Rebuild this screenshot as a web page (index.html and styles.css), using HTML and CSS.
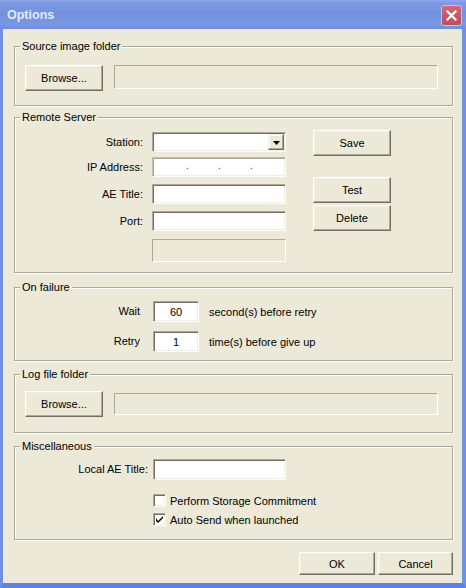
FILE: index.html
```html
<!DOCTYPE html>
<html>
<head>
<meta charset="utf-8">
<title>Options</title>
<link rel="stylesheet" href="styles.css">
</head>
<body>
<div class="window">
  <div class="titlebar">
    <span class="title">Options</span>
    <button class="close" type="button" aria-label="Close">
      <svg width="11" height="11" viewBox="0 0 11 11"><path d="M1.5 1.5 L9.5 9.5 M9.5 1.5 L1.5 9.5" stroke="#fff" stroke-width="2.2" stroke-linecap="square" fill="none"/></svg>
    </button>
  </div>
  <div class="frame">
    <fieldset class="group">
      <legend>Source image folder</legend>
      <div class="browse-row browse-source">
        <button class="btn btn-browse" type="button">Browse...</button>
        <input class="field field-path disabled" type="text" disabled>
      </div>
    </fieldset>

    <fieldset class="group">
      <legend>Remote Server</legend>
      <div class="remote-body">
        <div class="remote-grid">
          <label class="lbl">Station:</label>
          <div class="field combo"><span class="combo-text"></span><span class="combo-btn"><svg width="7" height="4" viewBox="0 0 7 4"><path d="M0 0 H7 L3.5 4 Z" fill="#000"/></svg></span></div>
          <label class="lbl">IP Address:</label>
          <div class="field ip"><span class="ip-seg"></span><span class="ip-dot">.</span><span class="ip-seg"></span><span class="ip-dot">.</span><span class="ip-seg"></span><span class="ip-dot">.</span><span class="ip-seg"></span></div>
          <label class="lbl">AE Title:</label>
          <input class="field" type="text">
          <label class="lbl">Port:</label>
          <input class="field" type="text">
          <span></span>
          <input class="field disabled field-tall" type="text" disabled>
        </div>
        <div class="remote-actions">
          <button class="btn btn-wide" type="button">Save</button>
          <button class="btn btn-wide btn-test" type="button">Test</button>
          <button class="btn btn-wide btn-delete" type="button">Delete</button>
        </div>
      </div>
    </fieldset>

    <fieldset class="group">
      <legend>On failure</legend>
      <div class="failure-grid">
        <label class="lbl lbl-fail">Wait</label>
        <input class="field field-num" type="text" value="60">
        <span class="suffix">second(s) before retry</span>
        <label class="lbl lbl-fail">Retry</label>
        <input class="field field-num" type="text" value="1">
        <span class="suffix">time(s) before give up</span>
      </div>
    </fieldset>

    <fieldset class="group">
      <legend>Log file folder</legend>
      <div class="browse-row browse-log">
        <button class="btn btn-browse" type="button">Browse...</button>
        <input class="field field-path field-log disabled" type="text" disabled>
      </div>
    </fieldset>

    <fieldset class="group">
      <legend>Miscellaneous</legend>
      <div class="misc-grid">
        <label class="lbl lbl-misc">Local AE Title:</label>
        <input class="field field-misc" type="text">
        <span></span>
        <div class="check-row check-first"><span class="checkbox"></span><span>Perform Storage Commitment</span></div>
        <div class="check-row"><span class="checkbox"><svg width="7" height="7" viewBox="0 0 7 7"><path d="M0 2 L0 5 L2 7 L7 2 L7 0 L2 5 Z" fill="#000"/></svg></span><span>Auto Send when launched</span></div>
      </div>
    </fieldset>

    <div class="dialog-buttons">
      <button class="btn btn-ok" type="button">OK</button>
      <button class="btn btn-cancel" type="button">Cancel</button>
    </div>
  </div>
</div>
</body>
</html>
```

FILE: styles.css
```css
* { box-sizing: border-box; }
html, body { margin: 0; padding: 0; }
body {
  width: 466px;
  height: 588px;
  overflow: hidden;
  background: #ECE9D8;
  font-family: "Liberation Sans", Arial, sans-serif;
  font-size: 11px;
  color: #000;
}

.window {
  width: 466px;
  height: 588px;
  display: flex;
  flex-direction: column;
}

.titlebar {
  height: 29px;
  flex: none;
  display: flex;
  align-items: flex-start;
  padding: 0 4px 0 7px;
  background: linear-gradient(to bottom, #8DA8EC 0, #7C99E3 3px, #7491E0 45%, #7A97E3 85%, #6E8BDB 100%);
}
.title {
  flex: 1;
  margin-top: 8px;
  color: #E2EBFB;
  font-weight: bold;
  font-size: 12.5px;
  line-height: 15px;
}
.close {
  appearance: none;
  margin: 5px 0 0 0;
  padding: 0;
  width: 21px;
  height: 21px;
  border: 1px solid #E7B3BC;
  border-radius: 3px;
  background: linear-gradient(to bottom, #CF6A7C, #C2566A 60%, #B9505F);
  display: flex;
  align-items: center;
  justify-content: center;
}
.close svg { display: block; }

.frame {
  flex: 1;
  display: flex;
  flex-direction: column;
  background: #ECE9D8;
  border-left: 3px solid #7390E0;
  border-right: 4px solid #7390E0;
  border-bottom: 5px solid #6281DC;
  padding: 0 9px 0 11px;
}

.group {
  margin: 7px 0 0 0;
  padding: 0;
  min-width: 0;
  border: 1px solid #ACA899;
  box-shadow: inset 1px 1px 0 #fff, 1px 1px 0 #fff;
}
.group:first-child { margin-top: 11px; }
.group:nth-child(2) { margin-top: 5px; }
.group:nth-child(3) { margin-top: 8px; }
.group legend {
  margin-left: 5px;
  padding: 0 2px;
  font-size: 11px;
  line-height: 13px;
  background: #ECE9D8;
}

.btn {
  appearance: none;
  margin: 0;
  padding: 0;
  font-family: inherit;
  font-size: 11px;
  color: #000;
  background: #ECE9D8;
  border: 1px solid;
  border-color: #fff #716F64 #716F64 #fff;
  box-shadow: inset -1px -1px 0 #ACA899, inset 1px 1px 0 #F1EFE2;
  text-align: center;
}
.btn-browse, .btn-wide { width: 78px; height: 26px; }

.field {
  display: block;
  margin: 0;
  padding: 0 3px;
  font-family: inherit;
  font-size: 11px;
  color: #000;
  background: #fff;
  border: 1px solid;
  border-color: #ACA899 #fff #fff #ACA899;
  box-shadow: inset 1px 1px 0 #716F64, inset -1px -1px 0 #F1EFE2;
  outline: none;
  height: 20px;
}
.field.disabled {
  background: #ECE9D8;
  box-shadow: none;
}

.browse-row {
  display: flex;
  align-items: flex-start;
  gap: 11px;
  padding-left: 10px;
}
.browse-source { padding-top: 12px; padding-bottom: 14px; }
.browse-log { padding-top: 10px; padding-bottom: 15px; }
.field-path { width: 324px; height: 24px; }
.field-log { height: 22px; margin-top: 2px; }

.remote-body {
  display: flex;
  align-items: flex-start;
  padding: 6px 0 10px 10px;
}
.remote-grid {
  display: grid;
  grid-template-columns: 118px 134px;
  grid-template-rows: 25px 27px 27px 28px 23px;
  column-gap: 9px;
  align-items: start;
  margin-top: 2px;
}
.lbl {
  text-align: right;
  line-height: 20px;
  white-space: nowrap;
}
.remote-grid .field { width: 134px; }
.field-tall { height: 23px; }

.combo {
  display: flex;
  padding: 1px;
}
.combo-text { flex: 1; }
.combo-btn {
  width: 16px;
  height: 16px;
  background: #ECE9D8;
  border: 1px solid;
  border-color: #F1EFE2 #716F64 #716F64 #F1EFE2;
  box-shadow: inset -1px -1px 0 #ACA899, inset 1px 1px 0 #fff;
  display: flex;
  align-items: center;
  justify-content: center;
}
.combo-btn svg { display: block; margin-top: 1px; }

.ip {
  display: grid;
  grid-template-columns: 33px 2px 30px 2px 30px 2px 1fr;
  padding: 0;
  line-height: 16px;
  border-color: #C2BFB0 #fff #fff #C2BFB0;
  box-shadow: inset 1px 1px 0 #A7A498, inset -1px -1px 0 #F1EFE2;
}
.ip-dot { font-size: 10px; color: #333; }

.remote-actions {
  display: flex;
  flex-direction: column;
  margin-left: 27px;
}
.btn-test { margin-top: 21px; }
.btn-delete { margin-top: 2px; }

.failure-grid {
  display: grid;
  grid-template-columns: 128px 46px auto;
  grid-auto-rows: 21px;
  row-gap: 9px;
  align-items: center;
  padding: 7px 0 8px 10px;
}
.lbl-fail { padding-right: 13px; line-height: 21px; }
.field-num { width: 46px; height: 21px; text-align: center; }
.suffix { padding-left: 10px; white-space: nowrap; }

.misc-grid {
  display: grid;
  grid-template-columns: 123px 133px 1fr;
  column-gap: 5px;
  align-items: start;
  padding: 6px 0 11px 10px;
}
.lbl-misc { line-height: 21px; }
.field-misc { width: 133px; height: 21px; }
.check-row {
  grid-column: 2 / 4;
  display: flex;
  align-items: center;
  gap: 4px;
  height: 17px;
  margin-top: 2px;
  white-space: nowrap;
}
.check-first { margin-top: 12px; }
.checkbox {
  width: 13px;
  height: 13px;
  flex: none;
  background: #fff;
  border: 1px solid;
  border-color: #ACA899 #fff #fff #ACA899;
  box-shadow: inset 1px 1px 0 #716F64, inset -1px -1px 0 #F1EFE2;
  display: flex;
  align-items: center;
  justify-content: center;
}
.checkbox svg { display: block; }

.dialog-buttons {
  display: flex;
  justify-content: flex-end;
  gap: 3px;
  margin-top: 12px;
}
.btn-ok { width: 76px; height: 23px; }
.btn-cancel { width: 75px; height: 23px; }
```
